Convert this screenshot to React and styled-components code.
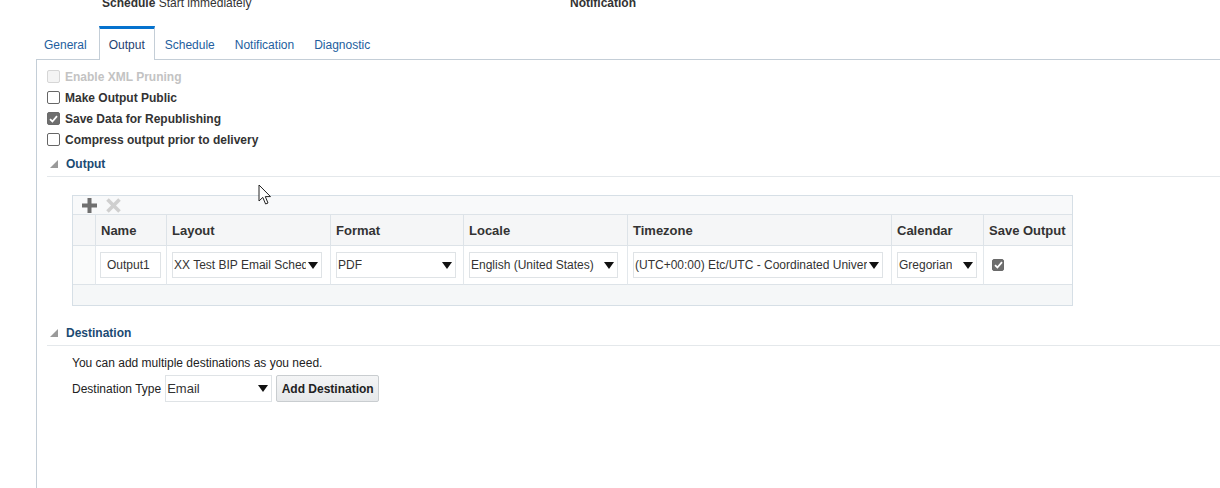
import React from 'react';
import styled, { createGlobalStyle, css } from 'styled-components';

const GlobalStyle = createGlobalStyle`
  html, body {
    margin: 0;
    padding: 0;
    background: #fff;
  }
  body {
    font-family: 'Liberation Sans', Arial, sans-serif;
    color: #333;
    overflow: hidden;
  }
`;

const Page = styled.div`
  position: relative;
  height: 488px;
  display: flex;
  flex-direction: column;
  overflow: hidden;
`;

const TopRow = styled.div`
  display: flex;
  margin-top: -4px;
  height: 14px;
  line-height: 14px;
  font-size: 12px;
  color: #333;
`;

const TopItem = styled.div`
  box-sizing: border-box;
  width: ${(p) => (p.width ? p.width + 'px' : 'auto')};
  padding-left: ${(p) => p.indent || 0}px;
  white-space: nowrap;
  b {
    font-weight: bold;
  }
`;

const TabBar = styled.div`
  display: flex;
  margin: 16px 0 0 36px;
  border-bottom: 1px solid #c4ced7;
  height: 33px;
`;

const Tab = styled.div`
  box-sizing: border-box;
  height: 34px;
  padding: 0 9px;
  font-size: 12px;
  display: flex;
  align-items: center;
  color: #235e9e;
  border: 1px solid transparent;
  border-top: 3px solid transparent;
  border-bottom: none;
  ${(p) =>
    p.first &&
    css`
      padding-left: 7px;
      padding-right: 11px;
    `}
  ${(p) =>
    p.active &&
    css`
      color: #1f4270;
      background: #fff;
      border-color: #c4ced7;
      border-top-color: #0572ce;
    `}
`;

const Panel = styled.div`
  flex: 1;
  margin-left: 36px;
  border-left: 1px solid #c4ced7;
  padding: 6px 0 0 10px;
`;

const CheckRow = styled.label`
  display: flex;
  align-items: center;
  height: 21px;
  gap: 5px;
  font-size: 12px;
  font-weight: bold;
  color: ${(p) => (p.disabled ? '#c3c3c3' : '#333')};
`;

const Box = styled.span`
  box-sizing: border-box;
  width: ${(p) => p.size || 13}px;
  height: ${(p) => p.size || 13}px;
  border-radius: 2px;
  display: inline-flex;
  align-items: center;
  justify-content: center;
  flex-shrink: 0;
  border: 1px solid ${(p) => (p.disabled ? '#d6d6d6' : p.checked ? '#6a6a6a' : '#666')};
  background: ${(p) => (p.disabled ? '#f4f4f4' : p.checked ? '#6e6e6e' : '#fff')};
`;

const Check = ({ checked, disabled, size }) => (
  <Box checked={checked} disabled={disabled} size={size}>
    {checked && (
      <svg width="9" height="8" viewBox="0 0 9 8">
        <path d="M1 4.2 L3.4 6.5 L8 1.2" fill="none" stroke="#fff" strokeWidth="1.8" />
      </svg>
    )}
  </Box>
);

const SectionHeader = styled.div`
  display: flex;
  align-items: center;
  gap: 8px;
  height: 25px;
  padding-left: 3px;
  border-bottom: 1px solid #e4e8eb;
  margin-top: ${(p) => p.top || 0}px;
  font-size: 12px;
  font-weight: bold;
  color: #1b4a72;
`;

const Twisty = () => (
  <svg width="8" height="8" viewBox="0 0 8 8">
    <polygon points="8,0 8,8 0,8" fill="#9a9a9a" />
  </svg>
);

const TableBox = styled.div`
  margin: 18px 0 0 25px;
  width: 1001px;
  border: 1px solid #d6dfe6;
  box-sizing: border-box;
`;

const Toolbar = styled.div`
  display: flex;
  align-items: center;
  gap: 9px;
  height: 18px;
  padding-left: 9px;
  background: #f8f9fa;
  border-bottom: 1px solid #dde3e8;
`;

const Grid = styled.div`
  display: grid;
  grid-template-columns: 23px 71px 164px 133px 164px 264px 92px 88px;
`;

const HeadCell = styled.div`
  height: 30px;
  display: flex;
  align-items: center;
  padding-left: 5px;
  font-size: 13px;
  font-weight: bold;
  color: #333;
  background: #f5f6f7;
  border-right: ${(p) => (p.last ? 'none' : '1px solid #dde3e8')};
  border-bottom: 1px solid #dde3e8;
  white-space: nowrap;
`;

const Cell = styled.div`
  height: 38px;
  display: flex;
  align-items: center;
  padding-left: ${(p) => p.pad ?? 5}px;
  background: ${(p) => (p.selector ? '#fafbfb' : '#fff')};
  border-right: ${(p) => (p.last ? 'none' : '1px solid #e3e8ec')};
  border-bottom: 1px solid #dde3e8;
`;

const Footer = styled.div`
  height: 20px;
  background: #f5f7f8;
`;

const TextInput = styled.div`
  box-sizing: border-box;
  width: ${(p) => p.width}px;
  height: 26px;
  border: 1px solid #dfe3e6;
  display: flex;
  align-items: center;
  padding-left: 6px;
  font-size: 12px;
  color: #333;
`;

const SelectBox = styled.div`
  box-sizing: border-box;
  width: ${(p) => p.width}px;
  height: ${(p) => p.height || 26}px;
  border: 1px solid #dfe3e6;
  background: #fff;
  display: flex;
  align-items: center;
  padding: 0 3px 0 1px;
  font-size: ${(p) => p.fs || 12}px;
  color: #333;
`;

const SelectText = styled.span`
  flex: 0 1 auto;
  min-width: 0;
  margin-right: 2px;
  overflow: hidden;
  white-space: nowrap;
`;

const ArrowIcon = styled.svg`
  flex-shrink: 0;
  margin-left: auto;
`;

const Arrow = () => (
  <ArrowIcon width="10" height="7" viewBox="0 0 10 7">
    <polygon points="0,0 10,0 5,7" fill="#111" />
  </ArrowIcon>
);

const Select = ({ value, width, height, fs }) => (
  <SelectBox width={width} height={height} fs={fs}>
    <SelectText>{value}</SelectText>
    <Arrow />
  </SelectBox>
);

const Body = styled.div`
  padding-left: 25px;
  font-size: 12px;
  color: #222;
`;

const Note = styled.div`
  margin-top: 10px;
  height: 14px;
  line-height: 14px;
`;

const DestRow = styled.div`
  display: flex;
  align-items: center;
  margin-top: 5px;
  gap: 4px;
`;

const DestLabel = styled.span`
  white-space: nowrap;
`;

const Button = styled.div`
  box-sizing: border-box;
  height: 27px;
  width: 103px;
  display: flex;
  align-items: center;
  justify-content: center;
  font-size: 12px;
  font-weight: bold;
  color: #222;
  border: 1px solid #c9cdd0;
  border-radius: 2px;
  background: linear-gradient(#f4f5f6, #e6e8ea);
`;

const Cursor = styled.svg`
  position: absolute;
  left: 258px;
  top: 184px;
`;

const PlusIcon = () => (
  <svg width="15" height="15" viewBox="0 0 15 15">
    <rect x="5.5" y="0" width="4" height="15" fill="#6f6f6f" />
    <rect x="0" y="5.5" width="15" height="4" fill="#6f6f6f" />
  </svg>
);

const CrossIcon = () => (
  <svg width="15" height="15" viewBox="0 0 15 15">
    <path d="M1.5 1.5 L13.5 13.5 M13.5 1.5 L1.5 13.5" stroke="#cfcfcf" strokeWidth="3.6" />
  </svg>
);

const headers = ['Name', 'Layout', 'Format', 'Locale', 'Timezone', 'Calendar', 'Save Output'];

export default function App() {
  return (
    <Page>
      <GlobalStyle />
      <TopRow>
        <TopItem width={570} indent={102}>
          <b>Schedule</b> Start immediately
        </TopItem>
        <TopItem>
          <b>Notification</b>
        </TopItem>
      </TopRow>

      <TabBar>
        <Tab first>General</Tab>
        <Tab active>Output</Tab>
        <Tab>Schedule</Tab>
        <Tab>Notification</Tab>
        <Tab>Diagnostic</Tab>
      </TabBar>

      <Panel>
        <CheckRow disabled>
          <Check disabled /> Enable XML Pruning
        </CheckRow>
        <CheckRow>
          <Check /> Make Output Public
        </CheckRow>
        <CheckRow>
          <Check checked /> Save Data for Republishing
        </CheckRow>
        <CheckRow>
          <Check /> Compress output prior to delivery
        </CheckRow>

        <SectionHeader top={1}>
          <Twisty />
          Output
        </SectionHeader>

        <TableBox>
          <Toolbar>
            <PlusIcon />
            <CrossIcon />
          </Toolbar>
          <Grid>
            <HeadCell />
            {headers.map((h, i) => (
              <HeadCell key={h} last={i === headers.length - 1}>
                {h}
              </HeadCell>
            ))}
            <Cell selector />
            <Cell pad={4}>
              <TextInput width={61}>Output1</TextInput>
            </Cell>
            <Cell>
              <Select width={150} value="XX Test BIP Email Schedule" />
            </Cell>
            <Cell>
              <Select width={120} value="PDF" />
            </Cell>
            <Cell>
              <Select width={149} value="English (United States)" />
            </Cell>
            <Cell>
              <Select width={250} value="(UTC+00:00) Etc/UTC - Coordinated Universal Time" />
            </Cell>
            <Cell>
              <Select width={80} value="Gregorian" />
            </Cell>
            <Cell last pad={8}>
              <Check checked size={12} />
            </Cell>
          </Grid>
          <Footer />
        </TableBox>

        <SectionHeader top={14}>
          <Twisty />
          Destination
        </SectionHeader>

        <Body>
          <Note>You can add multiple destinations as you need.</Note>
          <DestRow>
            <DestLabel>Destination Type</DestLabel>
            <Select width={107} height={27} fs={13} value="Email" />
            <Button>Add Destination</Button>
          </DestRow>
        </Body>
      </Panel>

      <Cursor width="14" height="22" viewBox="0 0 14 22">
        <path
          d="M1 1 L1 17 L4.8 13.4 L7.6 20 L10 19 L7.3 12.6 L12.5 12.6 Z"
          fill="#fff"
          stroke="#222"
          strokeWidth="1"
          strokeLinejoin="round"
        />
      </Cursor>
    </Page>
  );
}
